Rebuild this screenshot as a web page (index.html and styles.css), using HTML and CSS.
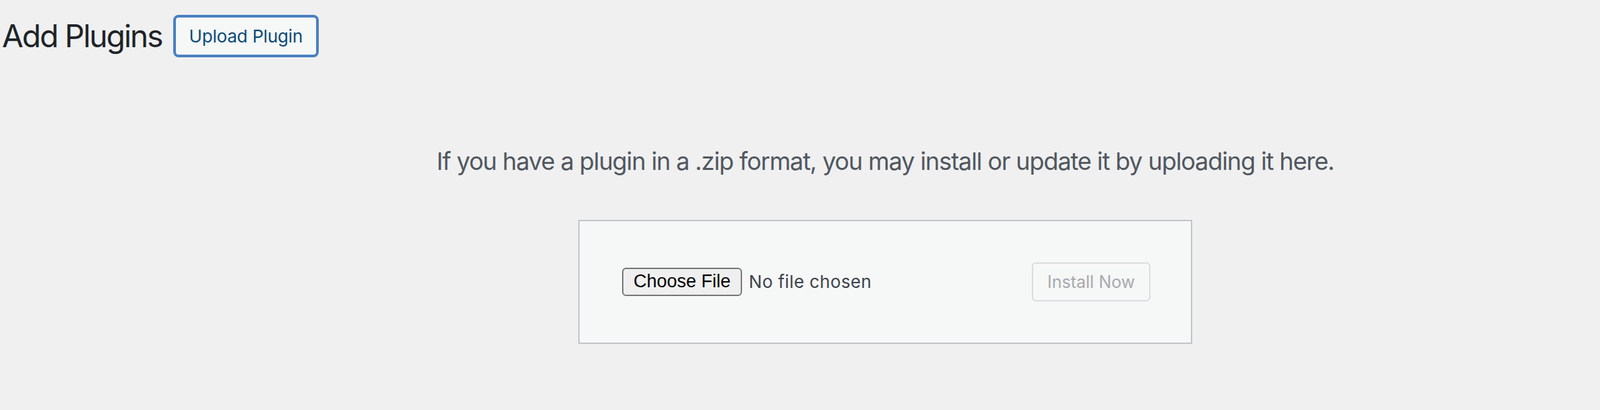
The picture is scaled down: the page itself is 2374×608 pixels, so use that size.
FILE: index.html
```html
<!DOCTYPE html>
<html lang="en">
<head>
<meta charset="utf-8">
<title>Add Plugins</title>
<link rel="stylesheet" href="styles.css">
</head>
<body>
<div class="page">
  <header class="title-row">
    <h1 class="page-title">Add Plugins</h1>
    <a class="upload-toggle" href="#">Upload Plugin</a>
  </header>
  <section class="upload-plugin">
    <p class="install-help">If you have a plugin in a .zip format, you may install or update it by uploading it here.</p>
    <form class="upload-form">
      <input class="file-input" type="file" name="pluginzip">
      <button class="install-btn" type="submit" disabled>Install Now</button>
    </form>
  </section>
</div>
</body>
</html>
```

FILE: styles.css
```css
html, body {
  margin: 0;
  padding: 0;
  background: #f0f0f1;
}
body {
  font-family: Inter, "Noto Sans", sans-serif;
  color: #3c434a;
}
.page {
  padding-top: 22px;
}
.title-row {
  display: flex;
  align-items: center;
  height: 63px;
  padding-left: 3px;
}
.page-title {
  margin: 0;
  font-size: 46px;
  font-weight: 400;
  line-height: 1.3;
  letter-spacing: -2px;
  color: #1d2327;
}
.upload-toggle {
  box-sizing: border-box;
  display: flex;
  align-items: center;
  justify-content: center;
  height: 63px;
  margin-left: 16px;
  padding: 0 20px;
  border: 4px solid #4a80c1;
  border-radius: 8px;
  background: #f6f7f7;
  color: #0a4b78;
  font-size: 26px;
  letter-spacing: -0.2px;
  text-decoration: none;
}
.upload-plugin {
  margin-left: 253px;
  text-align: center;
}
.install-help {
  margin: 131px 0 0;
  font-size: 36px;
  line-height: 46.8px;
  letter-spacing: -1.1px;
  color: #50575e;
}
.upload-form {
  box-sizing: border-box;
  display: flex;
  align-items: center;
  justify-content: space-between;
  width: 911px;
  margin: 63px auto 0;
  padding: 61px 60px 61px 63px;
  border: 2px solid #c3c4c7;
  background: #f6f7f7;
}
.file-input {
  font-family: Inter, "Noto Sans", sans-serif;
  font-size: 26px;
  letter-spacing: 0.35px;
  color: #3c434a;
}
.file-input::file-selector-button {
  box-sizing: border-box;
  height: 42px;
  margin-right: 10px;
  padding: 0 15px;
  border: 2px solid #767676;
  border-radius: 6px;
  background: #efefef;
  color: #000;
  font-family: "Liberation Sans", Arial, sans-serif;
  font-size: 27px;
  letter-spacing: 0;
}
.install-btn {
  box-sizing: border-box;
  height: 58px;
  padding: 0 21px;
  border: 2px solid #dcdcde;
  border-radius: 6px;
  background: #f6f7f7;
  color: #a7aaad;
  font-family: Inter, "Noto Sans", sans-serif;
  font-size: 25px;
}
```
